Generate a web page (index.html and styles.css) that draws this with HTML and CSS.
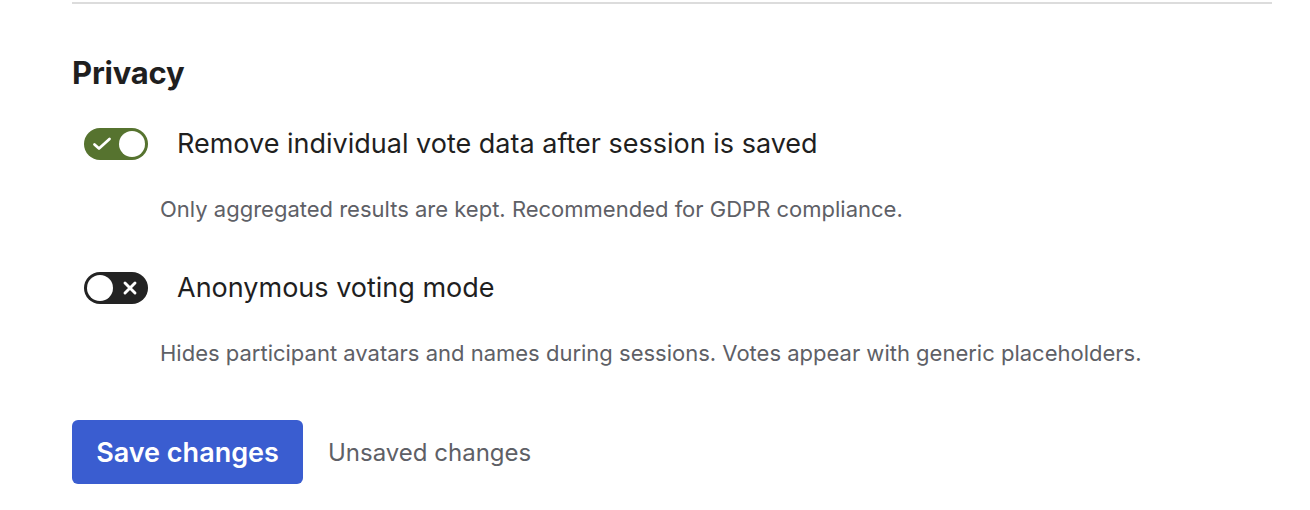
FILE: index.html
```html
<!DOCTYPE html>
<html lang="en">
<head>
<meta charset="utf-8">
<title>Privacy settings</title>
<link rel="stylesheet" href="styles.css">
</head>
<body>
<main class="page">
  <hr class="divider">
  <section class="section">
    <h2 class="section-title">Privacy</h2>

    <div class="setting">
      <div class="setting-row">
        <span class="toggle toggle-on" role="switch" aria-checked="true">
          <svg class="toggle-icon check" viewBox="0 0 20 20" width="20" height="20"><path d="M2.5 10.5 L7 14.5 L17.5 5" fill="none" stroke="#fff" stroke-width="2.8" stroke-linecap="round" stroke-linejoin="round"/></svg>
          <span class="knob"></span>
        </span>
        <span class="setting-label">Remove individual vote data after session is saved</span>
      </div>
      <p class="setting-desc">Only aggregated results are kept. Recommended for GDPR compliance.</p>
    </div>

    <div class="setting">
      <div class="setting-row">
        <span class="toggle toggle-off" role="switch" aria-checked="false">
          <span class="knob"></span>
          <svg class="toggle-icon cross" viewBox="0 0 16 16" width="16" height="16"><path d="M3 3 L13 13 M13 3 L3 13" fill="none" stroke="#fff" stroke-width="2.9" stroke-linecap="round"/></svg>
        </span>
        <span class="setting-label">Anonymous voting mode</span>
      </div>
      <p class="setting-desc">Hides participant avatars and names during sessions. Votes appear with generic placeholders.</p>
    </div>

    <div class="actions">
      <button class="btn-primary" type="button">Save changes</button>
      <span class="status">Unsaved changes</span>
    </div>
  </section>
</main>
</body>
</html>
```

FILE: styles.css
```css
* { box-sizing: border-box; }
html, body { margin: 0; padding: 0; background: #fff; }
body {
  font-family: Inter, "Noto Sans", "Liberation Sans", sans-serif;
  color: #1f1f1f;
}
.page {
  width: 1200px;
  margin-left: 72px;
  padding-top: 2px;
}
.divider {
  margin: 0;
  border: 0;
  height: 2px;
  background: #dcdcdc;
}
.section {
  padding-top: 49px;
}
.section-title {
  margin: 0 0 35px 0;
  font-size: 31px;
  line-height: 40px;
  font-weight: 700;
  color: #1f1f1f;
  letter-spacing: -0.2px;
}
.setting {
  padding-left: 12px;
  margin-bottom: 49px;
}
.setting-row {
  display: flex;
  align-items: center;
  gap: 29px;
  height: 32px;
}
.toggle {
  display: flex;
  align-items: center;
  justify-content: space-between;
  width: 64px;
  height: 32px;
  border-radius: 16px;
  padding: 0 3px;
  flex-shrink: 0;
}
.toggle-on { background: #56732f; padding-left: 8px; }
.toggle-off { background: #232323; padding-right: 10px; }
.knob {
  width: 26px;
  height: 26px;
  border-radius: 50%;
  background: #fff;
}
.toggle-icon { display: block; }
.setting-label {
  font-size: 27px;
  line-height: 32px;
  color: #1f1f1f;
}
.setting-desc {
  margin: 35px 0 0 76px;
  font-size: 22px;
  line-height: 28px;
  color: #5e6066;
}
.actions {
  display: flex;
  align-items: center;
  gap: 25px;
  padding-top: 4px;
}
.btn-primary {
  font-family: inherit;
  width: 231px;
  height: 64px;
  border: 0;
  border-radius: 6px;
  background: #3a5dd0;
  color: #fff;
  font-size: 27px;
  font-weight: 600;
  padding: 0;
}
.status {
  font-size: 24px;
  color: #5e6066;
}
```
